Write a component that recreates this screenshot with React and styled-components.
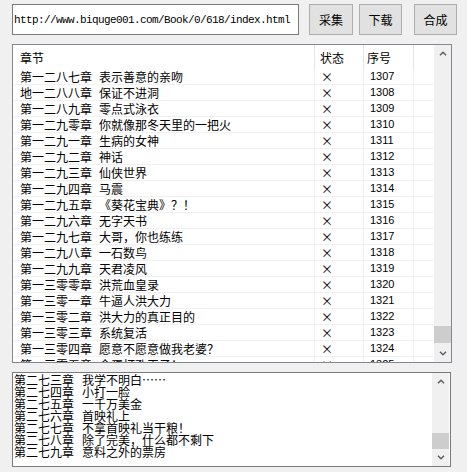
import React from "react"
import styled, { createGlobalStyle } from "styled-components"

const GlobalStyle = createGlobalStyle`
  body {
    margin: 0;
    background: #f0f0f0;
    font-family: "Noto Sans CJK SC", "Liberation Sans", sans-serif;
    font-size: 12px;
    color: #000;
  }
`;

const Window = styled.div`
  width: 467px;
  height: 472px;
  padding: 4px 0 0 12px;
  box-sizing: border-box;
  display: flex;
  flex-direction: column;
  gap: 9px;
`;

const Toolbar = styled.div`
  display: flex;
  align-items: flex-start;
  height: 31px;
`;

const UrlBox = styled.div`
  width: 287px;
  height: 31px;
  box-sizing: border-box;
  border: 1px solid #7a7a7a;
  background: #fff;
  display: flex;
  align-items: center;
  padding-left: 1px;
  font-family: "Liberation Mono", monospace;
  font-size: 11px;
  letter-spacing: -0.6px;
  margin-right: 10px;
`;

const Button = styled.button`
  width: ${p => p.$w}px;
  height: 31px;
  margin-left: ${p => p.$gap}px;
  box-sizing: border-box;
  border: 1px solid #adadad;
  background: #e1e1e1;
  font-family: "Noto Sans CJK SC", sans-serif;
  font-size: 12px;
  padding: 0;
  color: #000;
`;

const ListBox = styled.div`
  width: 440px;
  height: 319px;
  box-sizing: border-box;
  border: 1px solid #828790;
  background: #fff;
  display: flex;
  overflow: hidden;
`;

const Table = styled.div`
  width: 420px;
  display: grid;
  grid-template-columns: 302px 49px 50px 19px;
  grid-auto-rows: 16px;
  grid-template-rows: 24px;
  align-content: start;
  overflow: hidden;
`;

const HeadCell = styled.div`
  display: flex;
  align-items: center;
  padding-left: ${p => p.$pad}px;
  border-right: ${p => (p.$last ? "none" : "1px solid #e5e5e5")};
  font-size: 12px;
  box-sizing: border-box;
`;

const Cell = styled.div`
  display: flex;
  align-items: center;
  padding-left: ${p => p.$pad}px;
  box-sizing: border-box;
  border-bottom: 1px solid #f0f0f0;
  border-right: ${p => (p.$last ? "none" : "1px solid #f0f0f0")};
  white-space: nowrap;
  font-size: ${p => p.$size || 12}px;
  font-family: ${p => (p.$num ? '"Liberation Sans", sans-serif' : '"Noto Sans CJK SC", sans-serif')};
  line-height: 15px;
`;

const Title = styled.span`
  margin-left: ${p => p.$gap}px;
`;

const ScrollBar = styled.div`
  width: 17px;
  margin-left: ${p => p.$ml}px;
  background: #f0f0f0;
  display: flex;
  flex-direction: column;
`;

const Arrow = styled.div`
  height: 17px;
  display: flex;
  align-items: center;
  justify-content: center;
  flex-shrink: 0;
`;

const Track = styled.div`
  flex: 1;
  display: flex;
  flex-direction: column;
  justify-content: flex-end;
  padding-bottom: ${p => p.$pb}px;
`;

const Thumb = styled.div`
  height: ${p => p.$h}px;
  background: #cdcdcd;
`;

const Memo = styled.div`
  width: 439px;
  height: 95px;
  box-sizing: border-box;
  border: 1px solid #7a7a7a;
  background: #fff;
  display: flex;
`;

const MemoText = styled.div`
  flex: 1;
  padding: 1px 0 0 1px;
  overflow: hidden;
`;

const MemoLine = styled.div`
  font-size: 12px;
  line-height: 12px;
  height: 12px;
  white-space: nowrap;
`;

const Chevron = ({ up }) => (
  <svg width="8" height="5" viewBox="0 0 8 5">
    <path
      d={up ? "M1 4.2 L4 1.2 L7 4.2" : "M1 0.8 L4 3.8 L7 0.8"}
      fill="none"
      stroke="#606060"
      strokeWidth="1.5"
    />
  </svg>
);

const rows = [
  ["第一二八七章", "表示善意的亲吻", 1307],
  ["地一二八八章", "保证不进洞", 1308],
  ["第一二八九章", "零点式泳衣", 1309],
  ["第一二九零章", "你就像那冬天里的一把火", 1310],
  ["第一二九一章", "生病的女神", 1311],
  ["第一二九二章", "神话", 1312],
  ["第一二九三章", "仙侠世界", 1313],
  ["第一二九四章", "马震", 1314],
  ["第一二九五章", "《葵花宝典》？！", 1315],
  ["第一二九六章", "无字天书", 1316],
  ["第一二九七章", "大哥，你也练练", 1317],
  ["第一二九八章", "一石数鸟", 1318],
  ["第一二九九章", "天君凌风", 1319],
  ["第一三零零章", "洪荒血皇录", 1320],
  ["第一三零一章", "牛逼人洪大力", 1321],
  ["第一三零二章", "洪大力的真正目的", 1322],
  ["第一三零三章", "系统复活", 1323],
  ["第一三零四章", "愿意不愿意做我老婆？", 1324],
  ["第一三零五章", "金蛋打孔王子！", 1325],
];

const memo = [
  ["第二七三章", "我学不明白……"],
  ["第二七四章", "小打一脸"],
  ["第二七五章", "一千万美金"],
  ["第二七六章", "首映礼上"],
  ["第二七七章", "不拿首映礼当干粮！"],
  ["第二七八章", "除了完美，什么都不剩下"],
  ["第二七九章", "意料之外的票房"],
];

export default function App() {
  return (
    <>
      <GlobalStyle />
      <Window>
        <Toolbar>
          <UrlBox>http://www.biquge001.com/Book/0/618/index.html</UrlBox>
          <Button $w={44} $gap={0}>采集</Button>
          <Button $w={43} $gap={6}>下载</Button>
          <Button $w={43} $gap={12}>合成</Button>
        </Toolbar>

        <ListBox>
          <Table>
            <HeadCell $pad={7}>章节</HeadCell>
            <HeadCell $pad={5}>状态</HeadCell>
            <HeadCell $pad={3}>序号</HeadCell>
            <HeadCell $last />
            {rows.map(([num, title, id]) => (
              <React.Fragment key={id}>
                <Cell $pad={7}>
                  {num}
                  <Title $gap={7}>{title}</Title>
                </Cell>
                <Cell $pad={6} $size={12}>×</Cell>
                <Cell $pad={6} $size={11} $num>{id}</Cell>
                <Cell $last />
              </React.Fragment>
            ))}
          </Table>
          <ScrollBar $ml={1}>
            <Arrow><Chevron up /></Arrow>
            <Track $pb={2}><Thumb $h={17} /></Track>
            <Arrow><Chevron /></Arrow>
          </ScrollBar>
        </ListBox>

        <Memo>
          <MemoText>
            {memo.map(([num, title]) => (
              <MemoLine key={num}>
                {num}
                <Title $gap={8}>{title}</Title>
              </MemoLine>
            ))}
          </MemoText>
          <ScrollBar $ml={0}>
            <Arrow><Chevron up /></Arrow>
            <Track $pb={0}><Thumb $h={16} /></Track>
            <Arrow><Chevron /></Arrow>
          </ScrollBar>
          <div style={{ width: 1 }} />
        </Memo>
      </Window>
    </>
  )
}
